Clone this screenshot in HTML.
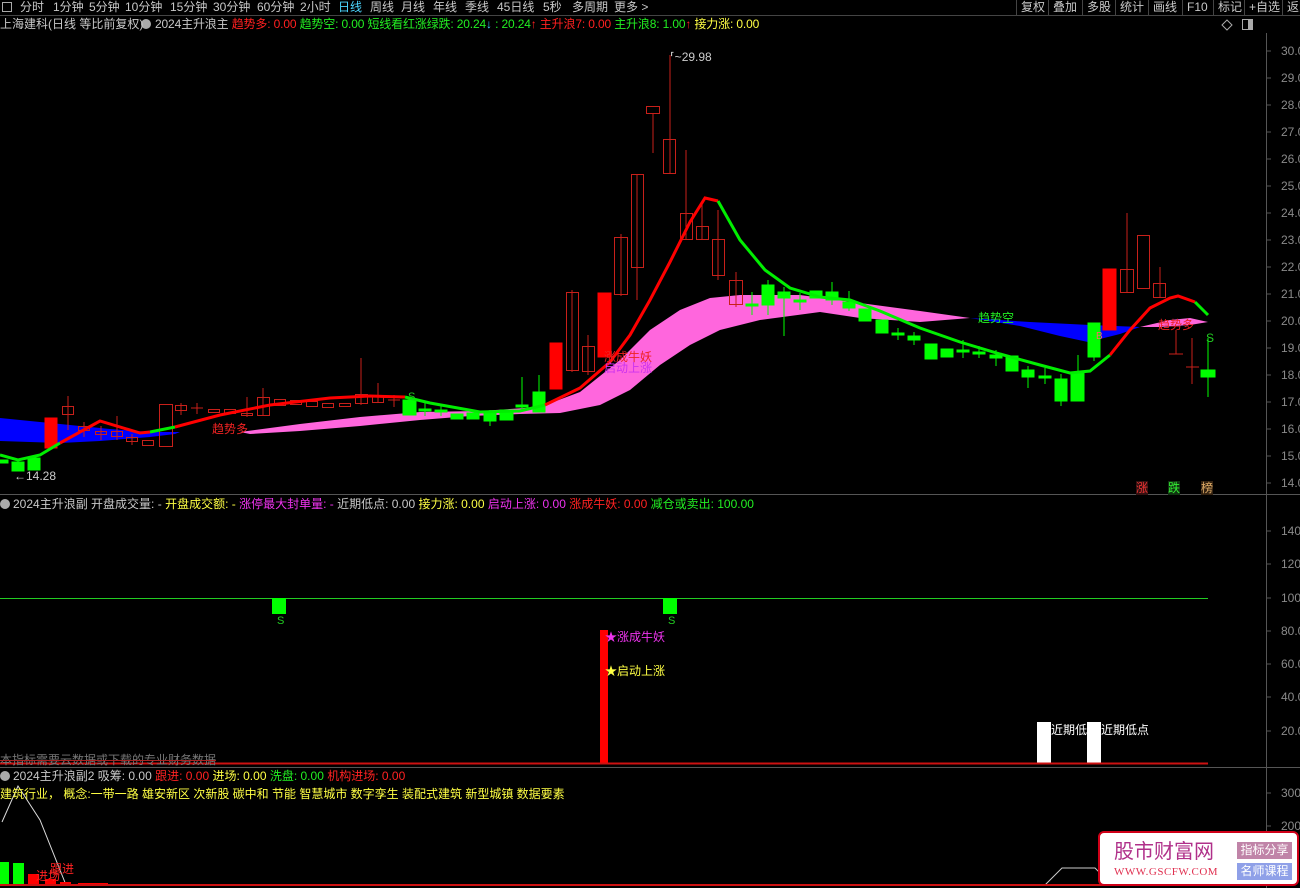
<!DOCTYPE html>
<html><head><meta charset="utf-8"><style>
*{margin:0;padding:0;box-sizing:border-box}
body{width:1300px;height:888px;background:#000;overflow:hidden;position:relative;font-family:"Liberation Sans","Noto Sans CJK SC",sans-serif;font-size:12px;color:#c8c8c8}
.a{position:absolute;white-space:nowrap;line-height:14px}
.tb span{position:absolute;top:0;line-height:14px;color:#c8c8c8;white-space:nowrap}
.rb{position:absolute;top:0;height:15px;border-left:1px solid #444;color:#c8c8c8;padding-left:4px;line-height:14px;white-space:nowrap;overflow:hidden}
.ax{position:absolute;left:1281px;color:#8a8a8a;font-size:12px;line-height:12px}
svg{position:absolute;left:0;top:0}
</style></head><body>
<svg width="1300" height="888">
<line x1="0" y1="15.5" x2="1300" y2="15.5" stroke="#444"/>
<line x1="1266.5" y1="33" x2="1266.5" y2="888" stroke="#555"/>
<line x1="0" y1="494.5" x2="1300" y2="494.5" stroke="#555"/>
<line x1="0" y1="767.5" x2="1300" y2="767.5" stroke="#555"/>
<g stroke="#555">
<line x1="1266" y1="51" x2="1271" y2="51"/><line x1="1266" y1="78" x2="1271" y2="78"/><line x1="1266" y1="105" x2="1271" y2="105"/><line x1="1266" y1="132" x2="1271" y2="132"/><line x1="1266" y1="159" x2="1271" y2="159"/><line x1="1266" y1="186" x2="1271" y2="186"/><line x1="1266" y1="213" x2="1271" y2="213"/><line x1="1266" y1="240" x2="1271" y2="240"/><line x1="1266" y1="267" x2="1271" y2="267"/><line x1="1266" y1="294" x2="1271" y2="294"/><line x1="1266" y1="321" x2="1271" y2="321"/><line x1="1266" y1="348" x2="1271" y2="348"/><line x1="1266" y1="375" x2="1271" y2="375"/><line x1="1266" y1="402" x2="1271" y2="402"/><line x1="1266" y1="429" x2="1271" y2="429"/><line x1="1266" y1="456" x2="1271" y2="456"/><line x1="1266" y1="483" x2="1271" y2="483"/>
<line x1="1266" y1="531" x2="1271" y2="531"/><line x1="1266" y1="564" x2="1271" y2="564"/><line x1="1266" y1="598" x2="1271" y2="598"/><line x1="1266" y1="631" x2="1271" y2="631"/><line x1="1266" y1="664" x2="1271" y2="664"/><line x1="1266" y1="697" x2="1271" y2="697"/><line x1="1266" y1="731" x2="1271" y2="731"/>
<line x1="1266" y1="793" x2="1271" y2="793"/><line x1="1266" y1="826" x2="1271" y2="826"/>
</g>
<polygon fill="#0000ff" points="0,418 60,424 110,429 150,432 180,432 175,434 150,437 100,441 60,443 0,441"/>
<polygon fill="#ff66dd" points="240,432 300,424 360,417 420,412 480,411 540,407 580,392 620,360 650,330 680,310 710,298 740,295 800,295 860,303 920,311 970,318 920,322 860,318 820,312 760,320 720,330 690,345 660,365 630,390 600,405 560,413 520,414 470,416 420,420 360,426 300,431 250,434"/>
<polygon fill="#0000ff" points="970,318 1030,322 1090,325 1140,327 1120,334 1100,339 1088,342 1060,336 1020,326"/>
<polygon fill="#ff66dd" points="1140,327 1170,320 1190,318 1208,322 1190,325 1160,327"/>
<g stroke="#00ff00" fill="#00ff00">
<rect x="0" y="460" width="8" height="3"/>
<rect x="12" y="462" width="12" height="9"/>
<rect x="28" y="458" width="12" height="12"/>
<rect x="403" y="400" width="13" height="15"/>
<line x1="425" y1="403" x2="425" y2="416"/><rect x="419" y="409" width="12" height="2"/>
<line x1="441" y1="405" x2="441" y2="416"/><rect x="435" y="410" width="12" height="2"/>
<rect x="451" y="414" width="12" height="5"/><rect x="467" y="413" width="12" height="6"/>
<line x1="490" y1="410" x2="490" y2="426"/><rect x="484" y="413" width="12" height="8"/>
<rect x="500" y="410" width="13" height="10"/>
<line x1="522" y1="377" x2="522" y2="412"/><rect x="516" y="405" width="12" height="2"/>
<line x1="539" y1="375" x2="539" y2="412"/><rect x="533" y="392" width="12" height="20"/>
<line x1="752" y1="292" x2="752" y2="315"/><rect x="746" y="304" width="12" height="2"/>
<line x1="768" y1="280" x2="768" y2="315"/><rect x="762" y="285" width="12" height="20"/>
<line x1="784" y1="287" x2="784" y2="336"/><rect x="778" y="292" width="12" height="6"/>
<line x1="800" y1="293" x2="800" y2="310"/><rect x="794" y="300" width="12" height="2"/>
<rect x="810" y="291" width="12" height="7"/>
<line x1="832" y1="282" x2="832" y2="305"/><rect x="826" y="292" width="12" height="8"/>
<line x1="849" y1="291" x2="849" y2="311"/><rect x="843" y="302" width="12" height="6"/>
<rect x="859" y="309" width="12" height="12"/>
<rect x="876" y="320" width="12" height="13"/>
<line x1="898" y1="328" x2="898" y2="340"/><rect x="892" y="333" width="12" height="2"/>
<line x1="914" y1="332" x2="914" y2="345"/><rect x="908" y="336" width="12" height="4"/>
<rect x="925" y="344" width="12" height="15"/>
<rect x="941" y="349" width="12" height="8"/>
<line x1="963" y1="340" x2="963" y2="358"/><rect x="957" y="350" width="12" height="2"/>
<line x1="979" y1="346" x2="979" y2="358"/><rect x="973" y="352" width="12" height="2"/>
<line x1="996" y1="350" x2="996" y2="366"/><rect x="990" y="355" width="12" height="3"/>
<rect x="1006" y="356" width="12" height="15"/>
<line x1="1028" y1="366" x2="1028" y2="388"/><rect x="1022" y="370" width="12" height="7"/>
<line x1="1045" y1="368" x2="1045" y2="384"/><rect x="1039" y="376" width="12" height="2"/>
<line x1="1061" y1="374" x2="1061" y2="406"/><rect x="1055" y="379" width="12" height="22"/>
<line x1="1078" y1="355" x2="1078" y2="401"/><rect x="1071" y="373" width="13" height="28"/>
<line x1="1094" y1="355" x2="1094" y2="361"/><rect x="1088" y="323" width="12" height="34"/>
<line x1="1208" y1="338" x2="1208" y2="397"/><rect x="1201" y="370" width="14" height="7"/>
</g>
<g fill="#ff0000" stroke="#ff0000">
<rect x="45" y="418" width="12" height="30"/>
<rect x="550" y="343" width="12" height="46"/>
<rect x="598" y="293" width="13" height="64"/>
<rect x="1103" y="269" width="13" height="61"/>
</g>
<g stroke="#c8201a" fill="none">
<line x1="68" y1="396" x2="68" y2="430"/><rect x="62.5" y="406.5" width="11" height="8"/>
<line x1="84" y1="422" x2="84" y2="437"/><rect x="78.5" y="426.5" width="11" height="4"/>
<line x1="101" y1="426" x2="101" y2="440"/><rect x="95.5" y="431.5" width="11" height="3"/>
<line x1="117" y1="416" x2="117" y2="440"/><rect x="111.5" y="431.5" width="11" height="5"/>
<line x1="132" y1="434" x2="132" y2="445"/><rect x="126.5" y="437.5" width="11" height="4"/>
<rect x="142.5" y="440.5" width="11" height="5"/>
<rect x="159.5" y="404.5" width="13" height="42"/>
<line x1="181" y1="403" x2="181" y2="415"/><rect x="175.5" y="405.5" width="11" height="5"/>
<line x1="197" y1="403" x2="197" y2="414"/><line x1="191" y1="408" x2="203" y2="408"/>
<rect x="208.5" y="409.5" width="11" height="3"/><rect x="224.5" y="409.5" width="11" height="4"/>
<line x1="247" y1="397" x2="247" y2="417"/><rect x="241.5" y="413.5" width="11" height="2"/>
<line x1="263" y1="388" x2="263" y2="415"/><rect x="257.5" y="397.5" width="12" height="18"/>
<rect x="274.5" y="399.5" width="11" height="6"/><rect x="290.5" y="400.5" width="11" height="4"/>
<rect x="306.5" y="401.5" width="11" height="5"/><rect x="322.5" y="403.5" width="11" height="4"/>
<rect x="339.5" y="403.5" width="11" height="3"/>
<line x1="361" y1="358" x2="361" y2="405"/><rect x="355.5" y="394.5" width="12" height="9"/>
<line x1="378" y1="383" x2="378" y2="403"/><rect x="372.5" y="396.5" width="11" height="6"/>
<line x1="394" y1="395" x2="394" y2="407"/><line x1="388" y1="400" x2="400" y2="400"/>
<line x1="572" y1="290" x2="572" y2="372"/><rect x="566.5" y="292.5" width="12" height="78"/>
<line x1="588" y1="335" x2="588" y2="375"/><rect x="582.5" y="346.5" width="12" height="25"/>
<line x1="621" y1="234" x2="621" y2="296"/><rect x="614.5" y="237.5" width="13" height="57"/>
<line x1="637" y1="174" x2="637" y2="300"/><rect x="631.5" y="174.5" width="12" height="93"/>
<line x1="653" y1="113" x2="653" y2="153"/><rect x="646.5" y="106.5" width="13" height="7"/>
<line x1="670" y1="55" x2="670" y2="173"/><rect x="663.5" y="139.5" width="12" height="34"/>
<line x1="686" y1="150" x2="686" y2="240"/><rect x="680.5" y="213.5" width="12" height="26"/>
<line x1="702" y1="203" x2="702" y2="240"/><rect x="696.5" y="226.5" width="12" height="13"/>
<line x1="718" y1="210" x2="718" y2="280"/><rect x="712.5" y="239.5" width="12" height="36"/>
<line x1="736" y1="272" x2="736" y2="307"/><rect x="729.5" y="280.5" width="13" height="24"/>
<line x1="1127" y1="213" x2="1127" y2="292"/><rect x="1120.5" y="269.5" width="13" height="23"/>
<rect x="1137.5" y="235.5" width="12" height="53"/>
<line x1="1160" y1="267" x2="1160" y2="297"/><rect x="1153.5" y="283.5" width="12" height="14"/>
<line x1="1176" y1="330" x2="1176" y2="354"/><line x1="1169" y1="354" x2="1183" y2="354"/>
<line x1="1192" y1="338" x2="1192" y2="384"/><line x1="1186" y1="367" x2="1199" y2="367"/>
</g>
<polyline fill="none" stroke="#00ee00" stroke-width="3" points="0,455 18,460 40,455 60,443"/>
<polyline fill="none" stroke="#ff0000" stroke-width="3" points="60,443 100,421 140,433 150,432"/>
<polyline fill="none" stroke="#00ee00" stroke-width="3" points="150,432 175,427"/>
<polyline fill="none" stroke="#ff0000" stroke-width="3" points="175,427 220,415 270,405 330,398 370,396 405,397"/>
<polyline fill="none" stroke="#00ee00" stroke-width="3" points="405,397 430,403 480,412 520,411 545,405"/>
<polyline fill="none" stroke="#ff0000" stroke-width="3" points="545,405 580,388 610,362 630,335 650,300 670,262 690,222 705,198 718,201"/>
<polyline fill="none" stroke="#00ee00" stroke-width="3" points="718,201 740,240 765,270 790,288 820,297 850,300 880,311 920,328 960,342 1000,354 1040,365 1070,373 1090,371 1110,355"/>
<polyline fill="none" stroke="#ff0000" stroke-width="3" points="1110,355 1130,330 1150,308 1170,298 1178,296 1195,302"/>
<polyline fill="none" stroke="#00ee00" stroke-width="3" points="1195,302 1208,315"/>
<line x1="0" y1="598.5" x2="1208" y2="598.5" stroke="#22cc22"/>
<rect x="272" y="598" width="14" height="16" fill="#00ff00"/>
<rect x="663" y="598" width="14" height="16" fill="#00ff00"/>
<rect x="600" y="630" width="8" height="133" fill="#ff0000"/>
<rect x="1037" y="722" width="14" height="41" fill="#fff"/>
<rect x="1087" y="722" width="14" height="41" fill="#fff"/>
<line x1="0" y1="763.5" x2="1208" y2="763.5" stroke="#cc1111" stroke-width="2"/>
<polyline fill="none" stroke="#ddd" points="2,822 18,786 40,820 66,885"/>
<rect x="0" y="862" width="9" height="22" fill="#00ff00"/>
<rect x="13" y="863" width="11" height="21" fill="#00ff00"/>
<rect x="28" y="874" width="11" height="10" fill="#ff0000"/>
<rect x="45" y="879" width="11" height="5" fill="#ff0000"/>
<rect x="60" y="882" width="11" height="2" fill="#ff0000"/>
<rect x="78" y="883" width="30" height="1" fill="#ff0000"/>
<polyline fill="none" stroke="#ccc" points="1045,885 1062,868 1095,868 1105,878"/>
<line x1="0" y1="885" x2="1208" y2="885" stroke="#cc1111" stroke-width="2"/>
<rect x="2.5" y="2.5" width="9" height="9" fill="none" stroke="#aaa"/>
<rect x="1242.5" y="19.5" width="10" height="10" fill="none" stroke="#aaa"/>
<rect x="1248" y="20" width="4" height="9" fill="#aaa"/>
<path d="M1227 20 L1232 25 L1227 30 L1222 25 Z" fill="none" stroke="#aaa"/>
<circle cx="146" cy="24" r="5" fill="#aaa"/>
<circle cx="5" cy="504" r="5" fill="#aaa"/>
<circle cx="5" cy="776" r="5" fill="#aaa"/>
</svg>
<div class="tb">
<span style="left:20px">分时</span><span style="left:53px">1分钟</span><span style="left:89px">5分钟</span><span style="left:125px">10分钟</span><span style="left:170px">15分钟</span><span style="left:213px">30分钟</span><span style="left:257px">60分钟</span><span style="left:300px">2小时</span><span style="left:338px;color:#4cd6ff">日线</span><span style="left:370px">周线</span><span style="left:401px">月线</span><span style="left:433px">年线</span><span style="left:465px">季线</span><span style="left:497px">45日线</span><span style="left:543px">5秒</span><span style="left:572px">多周期</span><span style="left:614px">更多 &gt;</span>
</div>
<div class="rb" style="left:1016px">复权</div><div class="rb" style="left:1048px">叠加</div><div class="rb" style="left:1082px">多股</div><div class="rb" style="left:1115px">统计</div><div class="rb" style="left:1148px">画线</div><div class="rb" style="left:1182px">F10</div><div class="rb" style="left:1213px">标记</div><div class="rb" style="left:1244px">+自选</div><div class="rb" style="left:1282px;width:18px">返回</div>
<div class="a" style="left:0;top:17px">上海建科(日线 等比前复权)</div>
<div class="a" style="left:155px;top:17px;letter-spacing:-0.15px"><span>2024主升浪主</span> <span style="color:#ff2020">趋势多: 0.00</span> <span style="color:#22ee22">趋势空: 0.00</span> <span style="color:#22ee22">短线看红涨绿跌: 20.24</span><span style="color:#4cf">↓</span> <span style="color:#22ee22">: 20.24</span><span style="color:#f22">↑</span> <span style="color:#ff2020">主升浪7: 0.00</span> <span style="color:#22ee22">主升浪8: 1.00</span><span style="color:#f22">↑</span> <span style="color:#ffff44">接力涨: 0.00</span></div>
<div class="ax" style="top:45px">30.0</div><div class="ax" style="top:72px">29.0</div><div class="ax" style="top:99px">28.0</div><div class="ax" style="top:126px">27.0</div><div class="ax" style="top:153px">26.0</div><div class="ax" style="top:180px">25.0</div><div class="ax" style="top:207px">24.0</div><div class="ax" style="top:234px">23.0</div><div class="ax" style="top:261px">22.0</div><div class="ax" style="top:288px">21.0</div><div class="ax" style="top:315px">20.0</div><div class="ax" style="top:342px">19.0</div><div class="ax" style="top:369px">18.0</div><div class="ax" style="top:396px">17.0</div><div class="ax" style="top:423px">16.0</div><div class="ax" style="top:450px">15.0</div><div class="ax" style="top:477px">14.0</div>
<div class="ax" style="top:525px">140</div><div class="ax" style="top:558px">120</div><div class="ax" style="top:592px">100</div><div class="ax" style="top:625px">80.0</div><div class="ax" style="top:658px">60.0</div><div class="ax" style="top:691px">40.0</div><div class="ax" style="top:725px">20.0</div>
<div class="ax" style="top:787px">300</div><div class="ax" style="top:820px">200</div>
<div class="a" style="left:14px;top:469px;color:#ccc">←14.28</div>
<div class="a" style="left:670px;top:50px;color:#ccc">⸢~29.98</div>
<div class="a" style="left:212px;top:422px;color:#ee2222">趋势多</div>
<div class="a" style="left:604px;top:350px;color:#ee2222">涨成牛妖</div>
<div class="a" style="left:604px;top:361px;color:#cc33ee">启动上涨</div>
<div class="a" style="left:978px;top:311px;color:#22ee22">趋势空</div>
<div class="a" style="left:1158px;top:318px;color:#ee2222">趋势多</div>
<div class="a" style="left:408px;top:390px;color:#22cc22;font-size:11px">S</div>
<div class="a" style="left:1206px;top:331px;color:#22cc22">S</div>
<div class="a" style="left:1096px;top:330px;color:#ff6666;font-size:10px">B</div>
<div class="a" style="left:1136px;top:481px;color:#ee3333;background:#331111">涨</div>
<div class="a" style="left:1168px;top:481px;color:#33ee33;background:#113311">跌</div>
<div class="a" style="left:1201px;top:481px;color:#ddaa66;background:#332211">榜</div>
<div class="a" style="left:13px;top:497px"><span>2024主升浪副</span> <span>开盘成交量: -</span> <span style="color:#ffff44">开盘成交额: -</span> <span style="color:#ee33ee">涨停最大封单量: -</span> <span>近期低点: 0.00</span> <span style="color:#ffff44">接力涨: 0.00</span> <span style="color:#ee33ee">启动上涨: 0.00</span> <span style="color:#ff2222">涨成牛妖: 0.00</span> <span style="color:#22ee22">减仓或卖出: 100.00</span></div>
<div class="a" style="left:277px;top:614px;color:#22cc22;font-size:11px">S</div>
<div class="a" style="left:668px;top:614px;color:#22cc22;font-size:11px">S</div>
<div class="a" style="left:605px;top:630px;color:#ee33ee">★涨成牛妖</div>
<div class="a" style="left:605px;top:664px;color:#ffff44">★启动上涨</div>
<div class="a" style="left:1051px;top:723px;color:#fff">近期低点</div>
<div class="a" style="left:1101px;top:723px;color:#fff">近期低点</div>
<div class="a" style="left:0;top:753px;color:#777;text-decoration:line-through;text-decoration-color:#a22">本指标需要云数据或下载的专业财务数据</div>
<div class="a" style="left:13px;top:769px"><span>2024主升浪副2</span> <span>吸筹: 0.00</span> <span style="color:#ff2222">跟进: 0.00</span> <span style="color:#ffff44">进场: 0.00</span> <span style="color:#22ee22">洗盘: 0.00</span> <span style="color:#ff2222">机构进场: 0.00</span></div>
<div class="a" style="left:0;top:787px;color:#ffff44">建筑行业， 概念:一带一路 雄安新区 次新股 碳中和 节能 智慧城市 数字孪生 装配式建筑 新型城镇 数据要素</div>
<div class="a" style="left:50px;top:862px;color:#ff2222">跟进</div>
<div class="a" style="left:36px;top:869px;color:#ff2222">进场</div>
<div style="position:absolute;left:1098px;top:831px;width:201px;height:55px;background:#fff;border:2px solid #d00018;border-radius:6px">
<div class="a" style="left:14px;top:6px;font-size:20px;line-height:22px;color:#b0308a;font-family:'Noto Sans CJK SC',sans-serif">股市财富网</div>
<div class="a" style="left:14px;top:32px;font-size:11px;color:#e03050;font-family:'Liberation Serif',serif;letter-spacing:0.5px">WWW.GSCFW.COM</div>
<div class="a" style="left:137px;top:9px;width:55px;height:17px;background:#c084a8;color:#fff;font-size:12px;line-height:17px;text-align:center">指标分享</div>
<div class="a" style="left:137px;top:30px;width:55px;height:17px;background:#8fa0e8;color:#fff;font-size:12px;line-height:17px;text-align:center">名师课程</div>
</div>
</body></html>
